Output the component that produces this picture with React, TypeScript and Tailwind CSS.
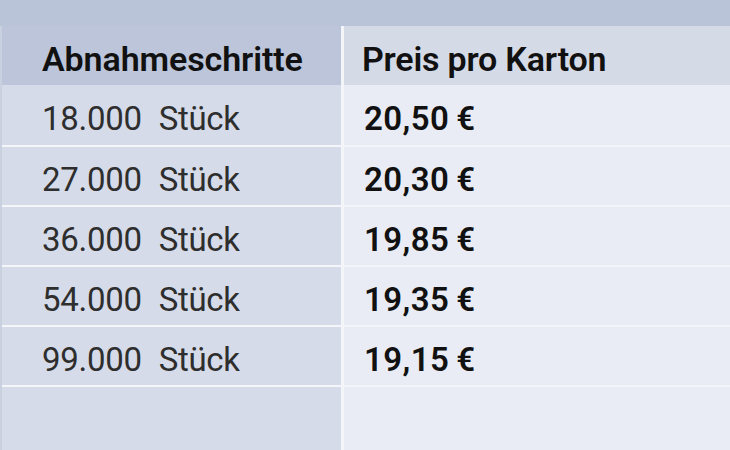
import React from "react";

const rows = [
  { qty: "18.000", price: "20,50" },
  { qty: "27.000", price: "20,30" },
  { qty: "36.000", price: "19,85" },
  { qty: "54.000", price: "19,35" },
  { qty: "99.000", price: "19,15" },
];

export default function App() {
  return (
    <div
      className="w-[730px] h-[450px] overflow-hidden bg-[#bac4d9] pt-[26px]"
      style={{ fontFamily: "Roboto, 'Liberation Sans', sans-serif" }}
    >
      <div className="grid grid-cols-[339px_1fr] gap-x-[3px] bg-[#f3f5f9] border-l-2 border-[#c9d0e0]">
        <div className="h-[59px] bg-[#bcc5d9] flex items-center pt-[7px] pl-[40px] text-[34px] font-semibold text-[#111] tracking-[-0.1px]">
          Abnahmeschritte
        </div>
        <div className="h-[59px] bg-[#d5dae7] flex items-center pt-[7px] pl-[18px] text-[34px] font-semibold text-[#111] tracking-[-0.2px]">
          Preis pro Karton
        </div>
        {rows.map((r, i) => (
          <React.Fragment key={i}>
            <div
              className={`${i === 0 ? "h-[60px]" : "h-[58px] mt-[2px]"} bg-[#d5dbe8] flex items-center pt-[7px] pl-[40px] text-[33px] text-[#2e2e2e] tracking-[-0.3px]`}
            >
              <span>{r.qty}</span>
              <span className="ml-[17px]">Stück</span>
            </div>
            <div
              className={`${i === 0 ? "h-[60px]" : "h-[58px] mt-[2px]"} bg-[#e9ecf4] flex items-center pt-[7px] pl-[20px] text-[33px] font-semibold text-[#111]`}
            >
              <span className="tracking-[0.4px]">{r.price}</span>
              <span className="ml-[7px]">€</span>
            </div>
          </React.Fragment>
        ))}
        <div className="h-[63px] mt-[2px] bg-[#d5dbe8]" />
        <div className="h-[63px] mt-[2px] bg-[#e9ecf4]" />
      </div>
    </div>
  );
}
